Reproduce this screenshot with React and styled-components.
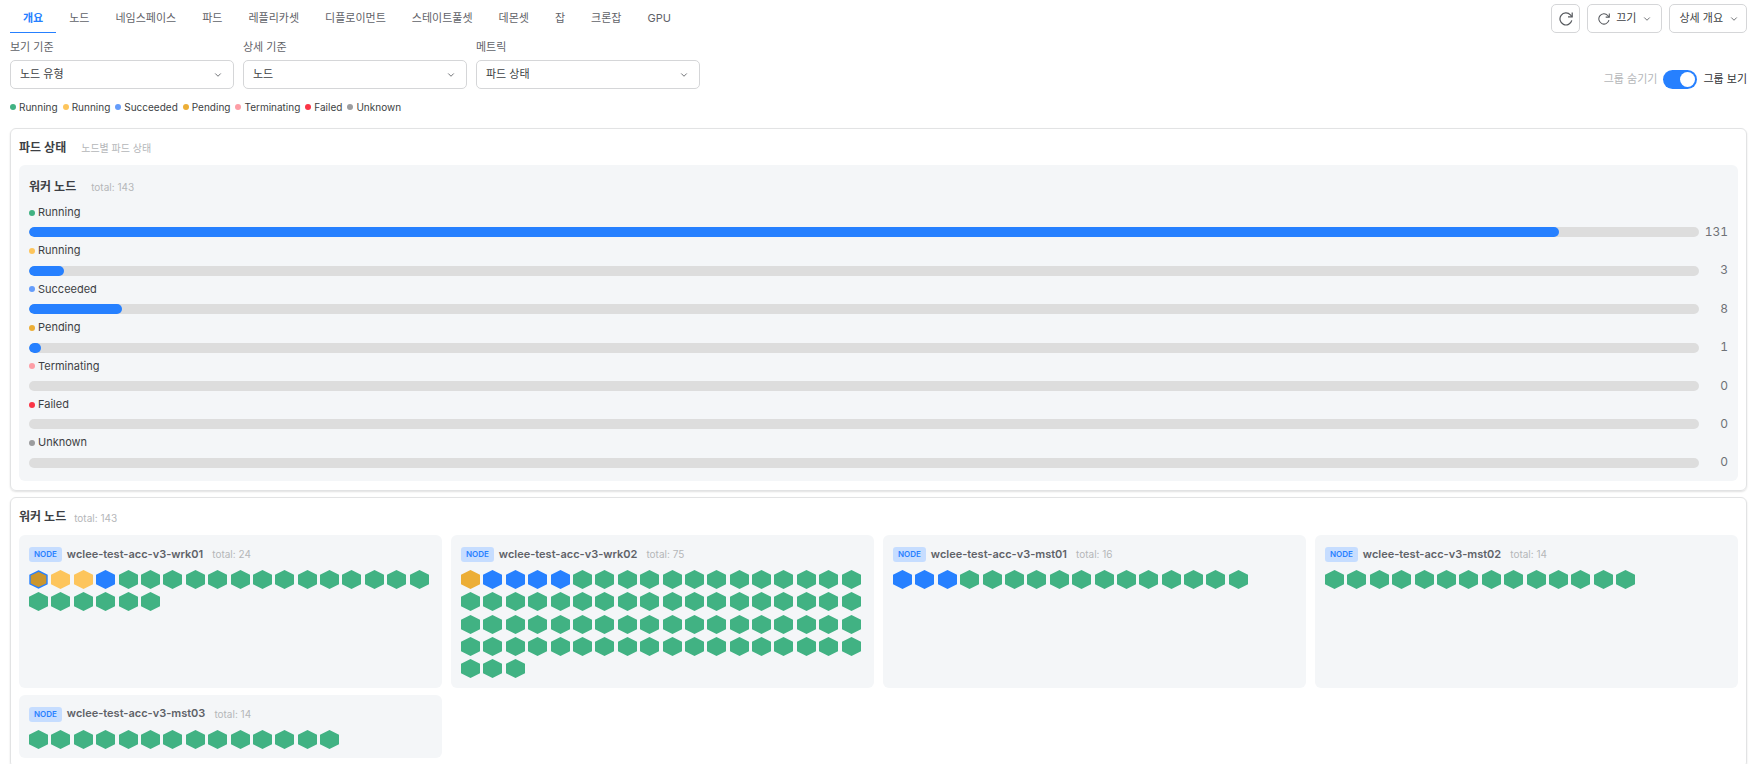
import React, { useState } from "react";
import styled, { createGlobalStyle } from "styled-components";
import { ChevronDown } from "lucide-react";

const GlobalStyle = createGlobalStyle`
  * {
    box-sizing: border-box;
  }

  body {
    margin: 0;
    background: #fff;
    color: #3d3f44;
    font-family: Inter, "Noto Sans CJK KR", sans-serif;
    font-size: 11px;
    line-height: 1.4;
  }

  button,
  select {
    font: inherit;
    color: inherit;
  }
`;

const Page = styled.div`
  padding: 4px 8px 8px 10px;
`;

const TopBar = styled.header`
  display: flex;
  justify-content: space-between;
  align-items: flex-start;
`;

const Tabs = styled.nav`
  display: flex;
`;

const Tab = styled.a`
  height: 29px;
  padding: 7px 13px 0;
  border-bottom: 1px solid ${(props) => (props.$active ? "#2680ff" : "transparent")};
  color: ${(props) => (props.$active ? "#2680ff" : "#5f6268")};
  font-weight: ${(props) => (props.$active ? 600 : 400)};
  text-decoration: none;
`;

const Actions = styled.div`
  display: flex;
  gap: 7px;
`;

const Button = styled.button`
  display: flex;
  align-items: center;
  justify-content: center;
  gap: 6px;
  height: 29px;
  padding: 0 7px 0 9px;
  border: 1px solid #d5d6d8;
  border-radius: 5px;
  background: #fff;
  cursor: pointer;
`;

const IconButton = styled(Button)`
  width: 29px;
  padding: 0;
`;

const IntervalButton = styled(Button)`
  padding: 0 9px 0 10px;
`;

const FilterBar = styled.div`
  display: flex;
  justify-content: space-between;
  align-items: flex-end;
  margin-top: 7px;
`;

const Filters = styled.div`
  display: flex;
  gap: 9px;
`;

const Field = styled.div`
  width: 224px;
`;

const FieldLabel = styled.label`
  display: block;
  height: 20px;
  color: #5f6268;
`;

const SelectBox = styled.div`
  position: relative;

  svg {
    position: absolute;
    right: 11px;
    top: 10px;
    pointer-events: none;
  }
`;

const Select = styled.select`
  display: block;
  width: 100%;
  height: 29px;
  padding: 0 28px 0 9px;
  border: 1px solid #d5d6d8;
  border-radius: 5px;
  background: #fff;
  appearance: none;
`;

const GroupSwitch = styled.label`
  display: flex;
  align-items: center;
  gap: 6px;
  height: 19px;
  color: #303236;
  cursor: pointer;
`;

const MutedText = styled.span`
  color: #b4b6b9;
`;

const Switch = styled.input`
  display: flex;
  align-items: center;
  width: 34px;
  height: 19px;
  margin: 0;
  padding: 0 2px;
  border-radius: 10px;
  background: #b4b6b9;
  appearance: none;
  cursor: pointer;

  &::before {
    content: "";
    width: 15px;
    height: 15px;
    border-radius: 50%;
    background: #fff;
  }

  &:checked {
    justify-content: flex-end;
    background: #2680ff;
  }
`;

const Legend = styled.ul`
  display: flex;
  gap: 5px;
  margin: 10px 0 14px;
  padding: 0;
  list-style: none;
`;

const LegendItem = styled.li`
  display: flex;
  align-items: center;
  gap: 3px;
  height: 15px;
  font-size: 10px;
`;

const Dot = styled.span`
  flex: none;
  width: 6px;
  height: 6px;
  border-radius: 50%;
  background: ${(props) => props.$color};
`;

const Panel = styled.section`
  margin-bottom: 6px;
  padding: 8px 8px 9px;
  border: 1px solid #e2e3e4;
  border-radius: 6px;
  box-shadow: 0 1px 2px rgba(0, 0, 0, 0.12);
`;

const PanelHeader = styled.div`
  display: flex;
  align-items: center;
  gap: 15px;
  height: 20px;
  margin-bottom: 8px;
  padding-top: 2px;
`;

const StatusHeader = styled(PanelHeader)`
  margin-bottom: 9px;
`;

const NodesHeader = styled(PanelHeader)`
  gap: 8px;
  height: 24px;
  margin-bottom: 5px;
  padding-top: 0;
`;

const Title = styled.h2`
  margin: 0;
  font-size: 12px;
  font-weight: 600;
`;

const Note = styled.span`
  color: #b4b6b9;
  font-size: 10px;
`;

const StatusBox = styled.div`
  padding: 11px 10px 13px;
  border-radius: 6px;
  background: #f4f6f8;
`;

const StatusRow = styled.div`
  & + & {
    margin-top: 6px;
  }
`;

const StatusName = styled.div`
  display: flex;
  align-items: center;
  gap: 3px;
  margin-bottom: 7px;
`;

const BarLine = styled.div`
  display: flex;
  align-items: center;
  height: 10px;
`;

const Track = styled.div`
  flex: 1;
  height: 10px;
  border-radius: 5px;
  background: #ddd;
  overflow: hidden;
`;

const Fill = styled.div`
  height: 100%;
  border-radius: 5px;
  background: #2680ff;
`;

const Count = styled.span`
  width: 29px;
  color: #6f7277;
  font-size: 12px;
  font-variant-numeric: tabular-nums;
  text-align: right;
`;

const NodeGrid = styled.div`
  display: grid;
  grid-template-columns: repeat(4, 1fr);
  gap: 7px 9px;
`;

const NodeCard = styled.article`
  padding: 10px 10px 6px;
  border-radius: 6px;
  background: #f4f6f8;
`;

const NodeHeader = styled.div`
  display: flex;
  align-items: center;
  height: 19px;
  margin-bottom: 6px;
`;

const Badge = styled.span`
  height: 15px;
  padding: 0 5px;
  border-radius: 3px;
  background: #c6ddff;
  color: #2680ff;
  font-size: 8px;
  font-weight: 600;
  line-height: 15px;
`;

const NodeName = styled.h3`
  margin: 0 9px 0 5px;
  color: #5f6268;
  font-size: 11px;
  font-weight: 600;
`;

const PodGrid = styled.div`
  display: grid;
  grid-template-columns: repeat(auto-fill, minmax(22px, 1fr));
`;

const PodCell = styled.div`
  aspect-ratio: 1;

  svg {
    display: block;
  }
`;

const tabs = [
  "개요",
  "노드",
  "네임스페이스",
  "파드",
  "레플리카셋",
  "디플로이먼트",
  "스테이트풀셋",
  "데몬셋",
  "잡",
  "크론잡",
  "GPU",
];

const filters = [
  { id: "view", label: "보기 기준", value: "노드 유형" },
  { id: "detail", label: "상세 기준", value: "노드" },
  { id: "metric", label: "메트릭", value: "파드 상태" },
];

const statuses = [
  { name: "Running", color: "#41b283", count: 131 },
  { name: "Running", color: "#fdc55c", count: 3 },
  { name: "Succeeded", color: "#659dfb", count: 8 },
  { name: "Pending", color: "#ecae36", count: 1 },
  { name: "Terminating", color: "#fd9ea6", count: 0 },
  { name: "Failed", color: "#fb3546", count: 0 },
  { name: "Unknown", color: "#9c9d9f", count: 0 },
];

const podColors = {
  running: "#41b283",
  warning: "#fdc55c",
  succeeded: "#2680ff",
  pending: "#ecae36",
  selected: "#cb962e",
};

const nodes = [
  { name: "wclee-test-acc-v3-wrk01", total: 24, pods: ["selected", "warning", "warning", "succeeded"] },
  { name: "wclee-test-acc-v3-wrk02", total: 75, pods: ["pending", "succeeded", "succeeded", "succeeded", "succeeded"] },
  { name: "wclee-test-acc-v3-mst01", total: 16, pods: ["succeeded", "succeeded", "succeeded"] },
  { name: "wclee-test-acc-v3-mst02", total: 14, pods: [] },
  { name: "wclee-test-acc-v3-mst03", total: 14, pods: [] },
];

const total = statuses.reduce((sum, status) => sum + status.count, 0);

const RefreshIcon = ({ size }) => (
  <svg width={size} height={size} viewBox="0 0 14 14" fill="none" stroke="#55585d" strokeWidth="1.2">
    <path d="M12.8 8.4A6 6 0 1 1 11.4 2.9L13 4.6" />
    <path d="M13.2 0.6V4.8H9" />
  </svg>
);

const Hexagon = ({ state }) => (
  <svg width="19" height="19" viewBox="0 0 19 19">
    {state === "selected" ? (
      <path d="M9.5 1L18 5.2V13.8L9.5 18L1 13.8V5.2Z" fill={podColors.selected} stroke="#2680ff" strokeWidth="1.4" />
    ) : (
      <path d="M9.5 0L19 4.8V14.2L9.5 19L0 14.2V4.8Z" fill={podColors[state]} />
    )}
  </svg>
);

const NodePods = ({ node }) => {
  // Everything that is not listed explicitly is a running pod
  const pods = Array.from({ length: node.total }, (_, i) => node.pods[i] || "running");

  return (
    <NodeCard>
      <NodeHeader>
        <Badge>NODE</Badge>
        <NodeName>{node.name}</NodeName>
        <Note>total: {node.total}</Note>
      </NodeHeader>
      <PodGrid>
        {pods.map((state, i) => (
          <PodCell key={i}>
            <Hexagon state={state} />
          </PodCell>
        ))}
      </PodGrid>
    </NodeCard>
  );
};

const App = () => {
  const [grouped, setGrouped] = useState(true);

  return (
    <Page>
      <GlobalStyle />
      <TopBar>
        <Tabs>
          {tabs.map((tab, i) => (
            <Tab key={tab} href="#" $active={i === 0}>
              {tab}
            </Tab>
          ))}
        </Tabs>
        <Actions>
          <IconButton aria-label="새로고침">
            <RefreshIcon size={14} />
          </IconButton>
          <IntervalButton>
            <RefreshIcon size={12} />
            끄기
            <ChevronDown size={10} color="#55585d" />
          </IntervalButton>
          <Button>
            상세 개요
            <ChevronDown size={10} color="#55585d" />
          </Button>
        </Actions>
      </TopBar>

      <FilterBar>
        <Filters>
          {filters.map((filter) => (
            <Field key={filter.id}>
              <FieldLabel htmlFor={filter.id}>{filter.label}</FieldLabel>
              <SelectBox>
                <Select id={filter.id}>
                  <option>{filter.value}</option>
                </Select>
                <ChevronDown size={10} color="#55585d" />
              </SelectBox>
            </Field>
          ))}
        </Filters>
        <GroupSwitch>
          <MutedText>그룹 숨기기</MutedText>
          <Switch type="checkbox" checked={grouped} onChange={(e) => setGrouped(e.target.checked)} />
          그룹 보기
        </GroupSwitch>
      </FilterBar>

      <Legend>
        {statuses.map((status, i) => (
          <LegendItem key={i}>
            <Dot $color={status.color} />
            {status.name}
          </LegendItem>
        ))}
      </Legend>

      {/* Pod status summary */}
      <Panel>
        <PanelHeader>
          <Title>파드 상태</Title>
          <Note>노드별 파드 상태</Note>
        </PanelHeader>
        <StatusBox>
          <StatusHeader>
            <Title>워커 노드</Title>
            <Note>total: {total}</Note>
          </StatusHeader>
          {statuses.map((status, i) => (
            <StatusRow key={i}>
              <StatusName>
                <Dot $color={status.color} />
                {status.name}
              </StatusName>
              <BarLine>
                <Track>
                  <Fill style={{ width: `${(status.count / total) * 100}%` }} />
                </Track>
                <Count>{status.count}</Count>
              </BarLine>
            </StatusRow>
          ))}
        </StatusBox>
      </Panel>

      {/* Pods of each node */}
      <Panel>
        <NodesHeader>
          <Title>워커 노드</Title>
          <Note>total: {total}</Note>
        </NodesHeader>
        <NodeGrid>
          {nodes.map((node) => (
            <NodePods key={node.name} node={node} />
          ))}
        </NodeGrid>
      </Panel>
    </Page>
  );
};

export default App;
